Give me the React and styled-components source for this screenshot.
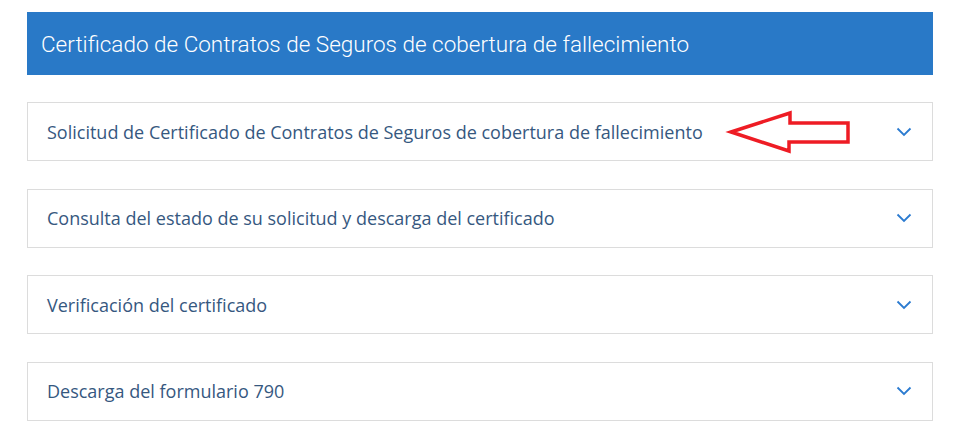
import styled, { createGlobalStyle } from "styled-components";

const GlobalStyle = createGlobalStyle`
	body {
		margin: 0;
		background: #fff;
	}
`;

const Page = styled.div`
	padding: 12px 30px 0 27px;
	width: 906px;
`;

const Header = styled.div`
	height: 63px;
	background: #2979c7;
	display: flex;
	align-items: center;
	padding-left: 14px;
	box-sizing: border-box;

	h1 {
		margin: 0;
		font-family: Roboto, "Liberation Sans", sans-serif;
		font-weight: 300;
		font-size: 22.5px;
		color: #fff;
	}
`;

const List = styled.div`
	display: flex;
	flex-direction: column;
	gap: 27.5px;
	margin-top: 27px;
`;

const Item = styled.div`
	position: relative;
	height: 59px;
	box-sizing: border-box;
	border: 1px solid #dcdcdc;
	display: flex;
	align-items: center;
	justify-content: space-between;
	padding: 0 20px 0 19px;
	font-family: "Open Sans", "Liberation Sans", sans-serif;
	font-size: 18px;
	color: #36587f;
`;

const Chevron = () => (
	<svg width="16" height="10" viewBox="0 0 16 10">
		<polyline
			points="1.5,1.5 8,8 14.5,1.5"
			fill="none"
			stroke="#2b7bd0"
			strokeWidth="1.8"
		/>
	</svg>
);

const Arrow = styled.svg`
	position: absolute;
	left: 673px;
	top: 7px;
`;

const sections = [
	"Solicitud de Certificado de Contratos de Seguros de cobertura de fallecimiento",
	"Consulta del estado de su solicitud y descarga del certificado",
	"Verificación del certificado",
	"Descarga del formulario 790",
];

export default function App() {
	return (
		<Page>
			<GlobalStyle />
			<Header>
				<h1>Certificado de Contratos de Seguros de cobertura de fallecimiento</h1>
			</Header>
			<List>
				{sections.map((title, i) => (
					<Item key={title}>
						<span>{title}</span>
						<Chevron />
						{i === 0 && (
							<Arrow width="150" height="46" viewBox="0 0 150 46">
								<polygon
									points="30,22 89,3 89,13 147,13 147,32 88,32 88,41"
									fill="none"
									stroke="#ee1c24"
									strokeWidth="3.5"
									strokeLinejoin="miter"
								/>
							</Arrow>
						)}
					</Item>
				))}
			</List>
		</Page>
	);
}
